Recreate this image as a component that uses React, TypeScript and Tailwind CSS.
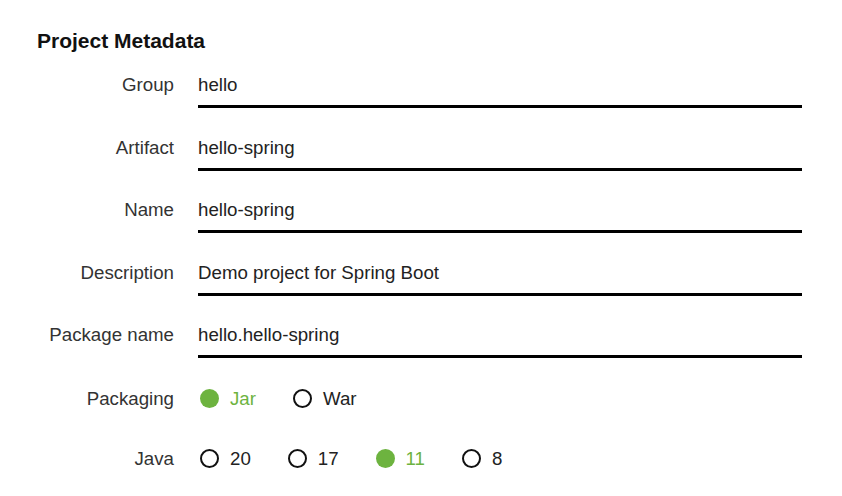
import React from "react";

const fields = [
  { label: "Group", value: "hello" },
  { label: "Artifact", value: "hello-spring" },
  { label: "Name", value: "hello-spring" },
  { label: "Description", value: "Demo project for Spring Boot" },
  { label: "Package name", value: "hello.hello-spring" },
];

function Radio({ label, checked }: { label: string; checked?: boolean }) {
  return (
    <div className="flex items-center mr-[37px]">
      {checked ? (
        <span className="block w-[19px] h-[19px] rounded-full bg-[#6db33f]" />
      ) : (
        <span className="block w-[19px] h-[19px] rounded-full border-2 border-[#111]" />
      )}
      <span className={`ml-[11px] ${checked ? "text-[#6db33f]" : "text-[#222]"}`}>{label}</span>
    </div>
  );
}

export default function App() {
  return (
    <div
      className="w-[842px] h-[496px] bg-white text-[#222] text-[18.7px] leading-[22px]"
      style={{ fontFamily: '"Liberation Sans", Arial, sans-serif' }}
    >
      <h1 className="pl-[37px] pt-[29px] text-[21px] leading-[24px] font-bold text-[#111]">Project Metadata</h1>

      <div className="mt-[18px] pr-[40px] flex flex-col">
        {/* Text fields */}
        {fields.map((f) => (
          <div key={f.label} className="grid grid-cols-[174px_1fr] gap-x-6 mb-[25.5px]">
            <div className="text-right pt-[3px] text-[#333]">{f.label}</div>
            <div className="h-[37px] border-b-[3px] border-black pt-[3px]">{f.value}</div>
          </div>
        ))}

        {/* Packaging */}
        <div className="grid grid-cols-[174px_1fr] gap-x-[26px] items-center mt-[4px]">
          <div className="text-right text-[#333]">Packaging</div>
          <div className="flex items-center h-[22px]">
            <Radio label="Jar" checked />
            <Radio label="War" />
          </div>
        </div>

        {/* Java */}
        <div className="grid grid-cols-[174px_1fr] gap-x-[26px] items-center mt-[38px]">
          <div className="text-right text-[#333]">Java</div>
          <div className="flex items-center h-[22px]">
            <Radio label="20" />
            <Radio label="17" />
            <Radio label="11" checked />
            <Radio label="8" />
          </div>
        </div>
      </div>
    </div>
  );
}
